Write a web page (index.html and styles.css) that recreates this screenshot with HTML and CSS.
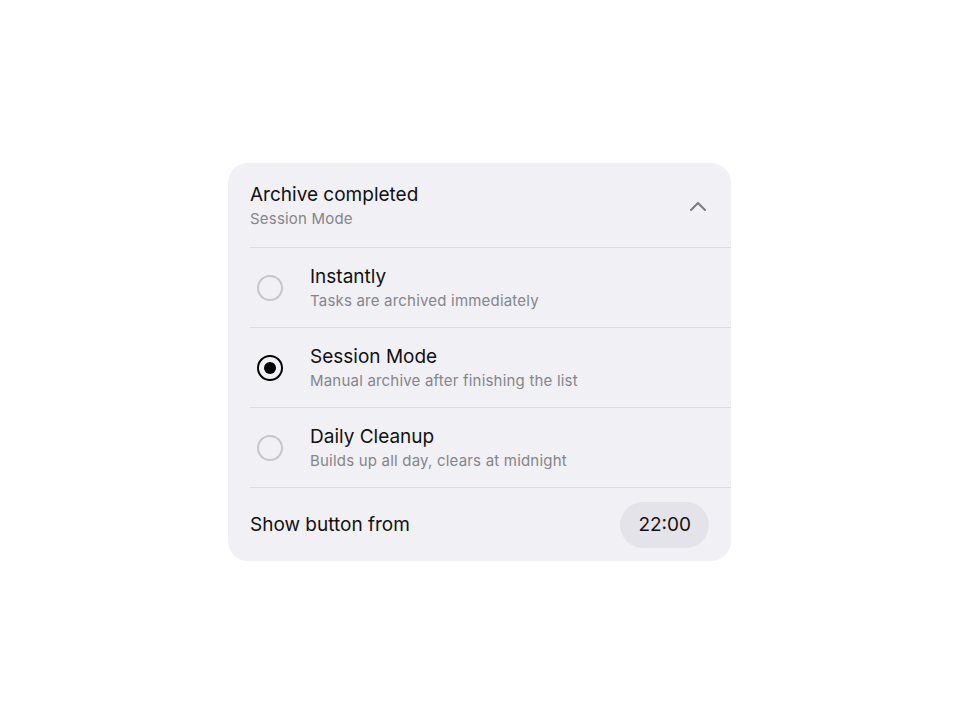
FILE: index.html
```html
<!DOCTYPE html>
<html lang="en">
<head>
    <meta charset="UTF-8">
    <meta name="viewport" content="width=device-width, initial-scale=1.0">
    <title>Archive completed</title>
    <link rel="stylesheet" href="styles.css">
</head>
<body>
    <div class="page">
        <div class="card">
            <div class="card-header">
                <div class="header-text">
                    <div class="title">Archive completed</div>
                    <div class="subtitle">Session Mode</div>
                </div>
                <svg class="chevron" width="18" height="10" viewBox="0 0 18 10">
                    <path d="M2 9 L9 2 L16 9" fill="none" stroke="#7b7b80" stroke-width="2" stroke-linecap="round" stroke-linejoin="round"/>
                </svg>
            </div>

            <div class="option">
                <span class="radio"></span>
                <div class="option-text">
                    <div class="title">Instantly</div>
                    <div class="subtitle">Tasks are archived immediately</div>
                </div>
            </div>
            <div class="option">
                <span class="radio checked"></span>
                <div class="option-text">
                    <div class="title">Session Mode</div>
                    <div class="subtitle">Manual archive after finishing the list</div>
                </div>
            </div>
            <div class="option">
                <span class="radio"></span>
                <div class="option-text">
                    <div class="title">Daily Cleanup</div>
                    <div class="subtitle">Builds up all day, clears at midnight</div>
                </div>
            </div>

            <div class="footer">
                <span class="footer-label">Show button from</span>
                <span class="time-pill">22:00</span>
            </div>
        </div>
    </div>
</body>
</html>
```

FILE: styles.css
```css
body {
    margin: 0;
    background-color: #ffffff;
    font-family: Inter, 'Noto Sans', sans-serif;
    color: #111111;
}
.page {
    padding: 163px 0 0 228px;
}
.card {
    width: 503px;
    background-color: #f1f0f5;
    border-radius: 20px;
    overflow: hidden;
}
.card-header {
    display: flex;
    align-items: center;
    justify-content: space-between;
    padding: 20px 24px 18px 22px;
}
.title {
    font-size: 19px;
    line-height: 24px;
    color: #111111;
}
.subtitle {
    font-size: 15px;
    line-height: 20px;
    margin-top: 2px;
    color: #85858a;
    letter-spacing: 0.2px;
}
.chevron {
    display: block;
}
.option {
    display: flex;
    align-items: center;
    height: 80px;
    margin-left: 22px;
    border-top: 1px solid #dcdbe0;
    box-sizing: border-box;
}
.radio {
    width: 26px;
    height: 26px;
    margin-left: 7px;
    margin-right: 27px;
    border-radius: 50%;
    border: 2px solid #c6c6cb;
    box-sizing: border-box;
    display: flex;
    align-items: center;
    justify-content: center;
}
.radio.checked {
    border: 2.5px solid #000000;
}
.radio.checked::after {
    content: '';
    width: 12px;
    height: 12px;
    border-radius: 50%;
    background-color: #000000;
}
.footer {
    display: flex;
    align-items: center;
    justify-content: space-between;
    height: 74px;
    margin-left: 22px;
    padding-right: 22px;
    border-top: 1px solid #dcdbe0;
    box-sizing: border-box;
}
.footer-label {
    font-size: 19px;
}
.time-pill {
    display: flex;
    align-items: center;
    height: 46px;
    padding: 0 18px;
    border-radius: 23px;
    background-color: #e4e3e9;
    font-size: 19px;
}
```
